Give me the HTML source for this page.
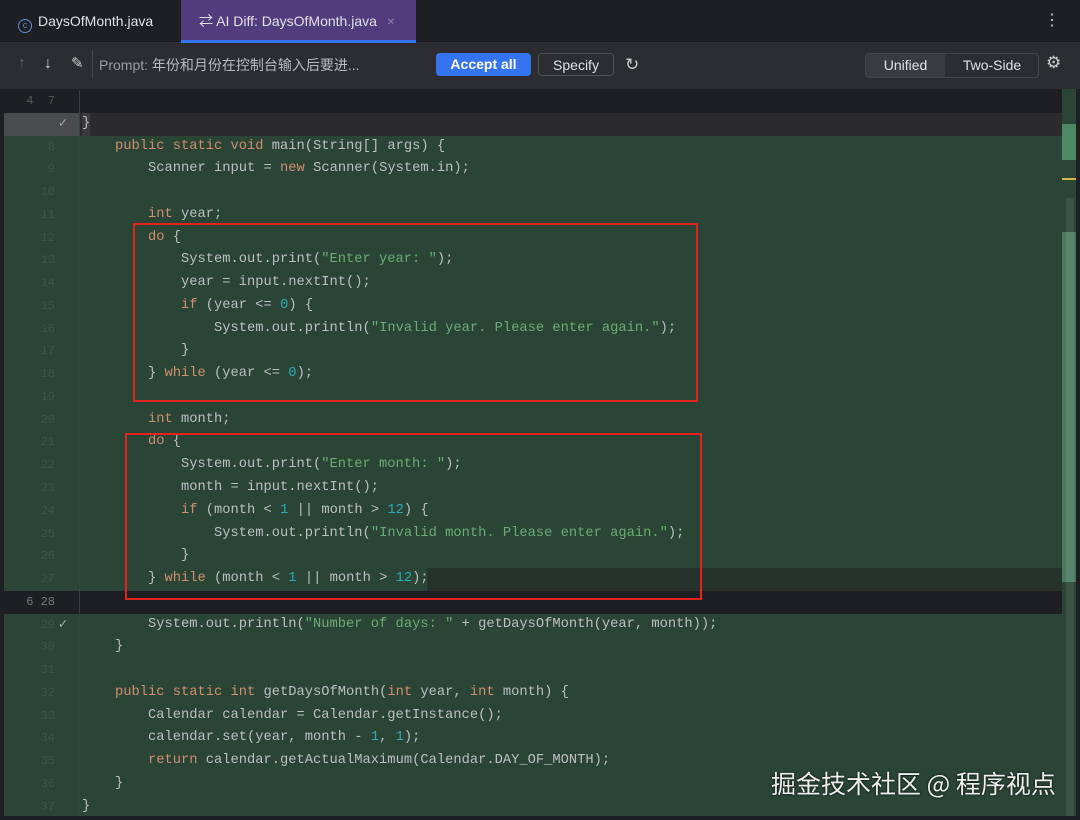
<!DOCTYPE html>
<html><head><meta charset="utf-8"><style>
*{margin:0;padding:0;box-sizing:border-box}
body{width:1080px;height:820px;background:#1e1f22;overflow:hidden;position:relative;font-family:"Liberation Sans","Noto Sans CJK SC",sans-serif;color:#dfe1e5}
.tabs{position:absolute;left:0;top:0;width:1080px;height:43px;background:#1e1f22;border-bottom:1px solid #2f3033}
.tab{position:absolute;top:0;height:43px;font-size:14px;line-height:43px}
.tb{position:absolute;top:43px;left:0;width:1080px;height:46px;background:#2b2d30}
.btn{position:absolute;top:53px;height:23px;border-radius:4px;font-size:14px;line-height:23px;text-align:center}
.code{position:absolute;left:0;top:90px;width:1062px}
.r{height:22.78px;position:relative;font-family:"Liberation Mono",monospace;font-size:13.75px;line-height:22.78px;white-space:pre;color:#bcbec4;background:#2a4536}
.r .n{position:absolute;left:0;width:80px;height:100%;color:#3a5546;font-size:12px;border-right:1px solid #34493e}
.r .n span{position:absolute;right:24px}
.r .c{position:absolute;left:82px}
.k{color:#cf8e6d}.s{color:#6aab73}.d{color:#2aacb8}
.box{position:absolute;border:2.5px solid #e5231d}
</style></head><body>
<div class="tabs">
 <div class="tab" style="left:18px;color:#dfe1e5"><span style="display:inline-block;width:14px;height:14px;border:1.5px solid #5a8cd6;border-radius:50%;vertical-align:-2px;font-size:9px;line-height:11px;text-align:center;color:#5a8cd6;margin-right:6px">c</span>DaysOfMonth.java</div>
 <div class="tab" style="left:181px;width:235px;background:#533c7e;padding-left:18px;border-bottom:3px solid #3574f0;line-height:42px">⇄ AI Diff: DaysOfMonth.java <span style="color:#8a7aa6;margin-left:6px">×</span></div>
 <div style="position:absolute;right:20px;top:10px;font-size:16px;color:#ccc">⋮</div>
</div>
<div class="tb">
 <div style="position:absolute;left:18px;top:12px;color:#666;font-size:16px">↑</div>
 <div style="position:absolute;left:44px;top:12px;color:#ccc;font-size:16px">↓</div>
 <div style="position:absolute;left:71px;top:11px;color:#ccc;font-size:15px">✎</div>
 <div style="position:absolute;left:92px;top:8px;width:1px;height:28px;background:#45474a"></div>
 <div style="position:absolute;left:99px;top:12px;font-size:14px;color:#9a9ca0">Prompt: <span style="color:#b8babe">年份和月份在控制台输入后要进...</span></div>
 <div style="position:absolute;left:625px;top:12px;font-size:17px;color:#ccc">↻</div>
</div>
<div class="btn" style="left:436px;width:95px;background:#3574f0;color:#fff;font-weight:bold">Accept all</div>
<div class="btn" style="left:538px;width:76px;border:1px solid #4e5157;color:#dfe1e5">Specify</div>
<div class="btn" style="left:865px;width:174px;border:1px solid #43454a;background:#2b2d30;height:25px;line-height:23px"><span style="position:absolute;left:0;width:79px;background:#393b40;height:23px;border-radius:3px 0 0 3px">Unified</span><span style="position:absolute;left:79px;width:94px">Two-Side</span></div>
<div style="position:absolute;left:1046px;top:53px;font-size:17px;color:#ccc">⚙</div>

<div class="code">
<div class="r" style="background:#1e1f22"><div class="n" style="border-right:1px solid #393b40;color:#555"><span style="right:24px">4  7</span></div></div>
<div class="r" style="background:#2b2b2d"><div class="n" style="background:#4a4b4c;color:#aaa"><span style="right:12px;font-size:14px">✓</span></div><div class="c" style="background:#3a3b3d">}</div></div>
<div class="r"><div class="n"><span>8</span></div><div class="c">    <span class="k">public static void</span> main(String[] args) {</div></div>
<div class="r"><div class="n"><span>9</span></div><div class="c">        Scanner input = <span class="k">new</span> Scanner(System.in);</div></div>
<div class="r"><div class="n"><span>10</span></div><div class="c"></div></div>
<div class="r"><div class="n"><span>11</span></div><div class="c">        <span class="k">int</span> year;</div></div>
<div class="r"><div class="n"><span>12</span></div><div class="c">        <span class="k">do</span> {</div></div>
<div class="r"><div class="n"><span>13</span></div><div class="c">            System.out.print(<span class="s">"Enter year: "</span>);</div></div>
<div class="r"><div class="n"><span>14</span></div><div class="c">            year = input.nextInt();</div></div>
<div class="r"><div class="n"><span>15</span></div><div class="c">            <span class="k">if</span> (year &lt;= <span class="d">0</span>) {</div></div>
<div class="r"><div class="n"><span>16</span></div><div class="c">                System.out.println(<span class="s">"Invalid year. Please enter again."</span>);</div></div>
<div class="r"><div class="n"><span>17</span></div><div class="c">            }</div></div>
<div class="r"><div class="n"><span>18</span></div><div class="c">        } <span class="k">while</span> (year &lt;= <span class="d">0</span>);</div></div>
<div class="r"><div class="n"><span>19</span></div><div class="c"></div></div>
<div class="r"><div class="n"><span>20</span></div><div class="c">        <span class="k">int</span> month;</div></div>
<div class="r"><div class="n"><span>21</span></div><div class="c">        <span class="k">do</span> {</div></div>
<div class="r"><div class="n"><span>22</span></div><div class="c">            System.out.print(<span class="s">"Enter month: "</span>);</div></div>
<div class="r"><div class="n"><span>23</span></div><div class="c">            month = input.nextInt();</div></div>
<div class="r"><div class="n"><span>24</span></div><div class="c">            <span class="k">if</span> (month &lt; <span class="d">1</span> || month &gt; <span class="d">12</span>) {</div></div>
<div class="r"><div class="n"><span>25</span></div><div class="c">                System.out.println(<span class="s">"Invalid month. Please enter again."</span>);</div></div>
<div class="r"><div class="n"><span>26</span></div><div class="c">            }</div></div>
<div class="r"><div style="position:absolute;left:427px;right:0;top:0;bottom:0;background:#26332c"></div><div class="n"><span>27</span></div><div class="c">        } <span class="k">while</span> (month &lt; <span class="d">1</span> || month &gt; <span class="d">12</span>);</div></div>
<div class="r" style="background:#1e1f22"><div class="n" style="border-right:1px solid #393b40;color:#777"><span>6 28</span></div></div>
<div class="r"><div class="n"><span style="right:24px">29</span><span style="right:12px;color:#aaa;font-size:14px">✓</span></div><div class="c">        System.out.println(<span class="s">"Number of days: "</span> + getDaysOfMonth(year, month));</div></div>
<div class="r"><div class="n"><span>30</span></div><div class="c">    }</div></div>
<div class="r"><div class="n"><span>31</span></div><div class="c"></div></div>
<div class="r"><div class="n"><span>32</span></div><div class="c">    <span class="k">public static int</span> getDaysOfMonth(<span class="k">int</span> year, <span class="k">int</span> month) {</div></div>
<div class="r"><div class="n"><span>33</span></div><div class="c">        Calendar calendar = Calendar.getInstance();</div></div>
<div class="r"><div class="n"><span>34</span></div><div class="c">        calendar.set(year, month - <span class="d">1</span>, <span class="d">1</span>);</div></div>
<div class="r"><div class="n"><span>35</span></div><div class="c">        <span class="k">return</span> calendar.getActualMaximum(Calendar.DAY_OF_MONTH);</div></div>
<div class="r"><div class="n"><span>36</span></div><div class="c">    }</div></div>
<div class="r"><div class="n"><span>37</span></div><div class="c">}</div></div>
</div>
<div style="position:absolute;left:0;top:89px;width:4px;height:731px;background:#1e1f22"></div>
<div style="position:absolute;left:1062px;top:89px;width:18px;height:731px;background:#2a4536"></div>
<div style="position:absolute;left:1062px;top:124px;width:14px;height:36px;background:#4d8862"></div>
<div style="position:absolute;left:1062px;top:178px;width:14px;height:2px;background:#d4b44a"></div>
<div style="position:absolute;left:1062px;top:232px;width:14px;height:350px;background:#4d7a5f"></div>
<div style="position:absolute;left:1066px;top:198px;width:8px;height:620px;background:rgba(255,255,255,0.08)"></div>
<div style="position:absolute;left:1076px;top:89px;width:4px;height:731px;background:#1e1f22"></div>
<div style="position:absolute;left:0;top:816px;width:1080px;height:4px;background:#1e1f22"></div>
<div class="box" style="left:133px;top:223px;width:565px;height:179px"></div>
<div class="box" style="left:125px;top:433px;width:577px;height:167px"></div>
<div style="position:absolute;left:771px;top:765px;font-size:25px;color:#eee;text-shadow:0 0 2px #000;font-family:'Noto Sans CJK SC',sans-serif">掘金技术社区 @ 程序视点</div>
</body></html>
